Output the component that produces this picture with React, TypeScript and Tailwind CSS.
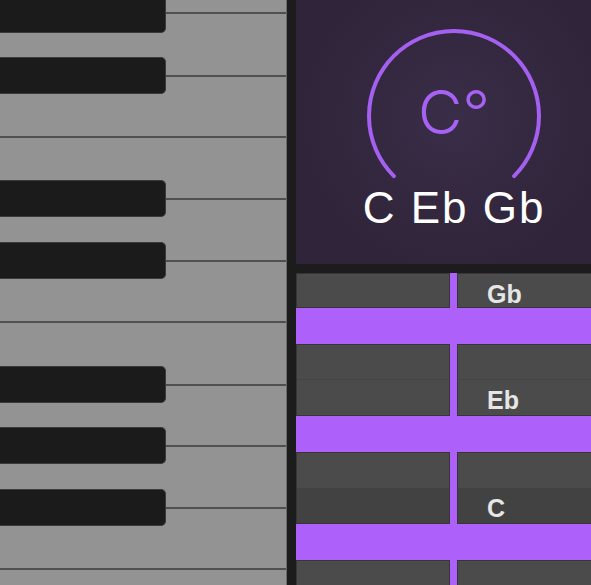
import React from "react";

const whiteSegs = [14, 63, 61, 62, 62, 61, 63, 61, 62, 61, 15];
const blackTops = [-4, 57, 180, 242, 366, 427, 489];

function Piano() {
  return (
    <div className="relative w-[287px] h-full shrink-0 bg-[#939393] border-r border-[#6b6b6b]">
      <div className="flex flex-col">
        {whiteSegs.map((h, i) => (
          <div
            key={i}
            className={"shrink-0 " + (i < whiteSegs.length - 1 ? "border-b-2 border-[#505050]" : "")}
            style={{ height: h }}
          />
        ))}
      </div>
      {blackTops.map((t, i) => (
        <div
          key={i}
          className="absolute left-0 w-[166px] h-[37px] bg-[#1b1b1b] rounded-r-[5px] border border-l-0 border-[#3a3a3a]"
          style={{ top: t }}
        />
      ))}
    </div>
  );
}

function ChordPanel() {
  return (
    <div className="h-[264px] shrink-0 flex flex-col items-center pt-[26px] bg-[radial-gradient(circle_at_50%_45%,#3a2d48_0%,#2f2439_75%)]">
      <div className="relative w-[180px] h-[154px] shrink-0 flex justify-center">
        <svg className="absolute inset-0" width="180" height="154" viewBox="0 0 180 154">
          <path
            d="M 29.9 150.1 A 85 85 0 1 1 150.1 150.1"
            fill="none"
            stroke="#a55ff1"
            strokeWidth="4"
            strokeLinecap="round"
          />
        </svg>
        <div className="relative pt-[56px] text-[61px] leading-[60px] font-light text-[#a862f3] font-['Inter',sans-serif]">
          C°
        </div>
      </div>
      <div className="mt-[6px] text-[44px] leading-[44px] tracking-[2px] text-white font-['Liberation_Sans',Arial,sans-serif]">
        C Eb Gb
      </div>
    </div>
  );
}

type Row = { h: number; dark?: boolean; label?: string; line?: boolean };

function Cell({ rows, right }: { rows: Row[]; right?: boolean }) {
  return (
    <div
      className={
        (right ? "flex-1 " : "w-[154px] ") +
        "flex flex-col border border-[#363636] overflow-hidden"
      }
    >
      {rows.map((r, i) => (
        <div
          key={i}
          className={
            (r.dark ? "bg-[#424242] " : "bg-[#4b4b4b] ") +
            (r.line ? "border-b border-[#444444] " : "") +
            "shrink-0 pl-[29px] pt-[8px] text-[25px] leading-[24px] font-bold text-[#e6e6e6] font-['Liberation_Sans',Arial,sans-serif]"
          }
          style={{ height: r.h }}
        >
          {right && r.label ? r.label : null}
        </div>
      ))}
    </div>
  );
}

function Segment({ rows }: { rows: Row[] }) {
  return (
    <div className="flex shrink-0 gap-[7px]">
      <Cell rows={rows} />
      <Cell rows={rows} right />
    </div>
  );
}

function Note() {
  return <div className="h-[36px] shrink-0" />;
}

function Grid() {
  return (
    <div className="flex flex-col bg-[#ae60fb]">
      <Segment rows={[{ h: 33, label: "Gb" }]} />
      <Note />
      <Segment rows={[{ h: 35, line: true }, { h: 35, label: "Eb" }]} />
      <Note />
      <Segment rows={[{ h: 35 }, { h: 35, dark: true, label: "C" }]} />
      <Note />
      <Segment rows={[{ h: 40 }]} />
    </div>
  );
}

export default function App() {
  return (
    <div className="w-[591px] h-[585px] flex overflow-hidden bg-[#1c1c1c]">
      <Piano />
      <div className="ml-[9px] w-[316px] shrink-0 flex flex-col">
        <ChordPanel />
        <div className="mt-[9px] shrink-0">
          <Grid />
        </div>
      </div>
    </div>
  );
}
